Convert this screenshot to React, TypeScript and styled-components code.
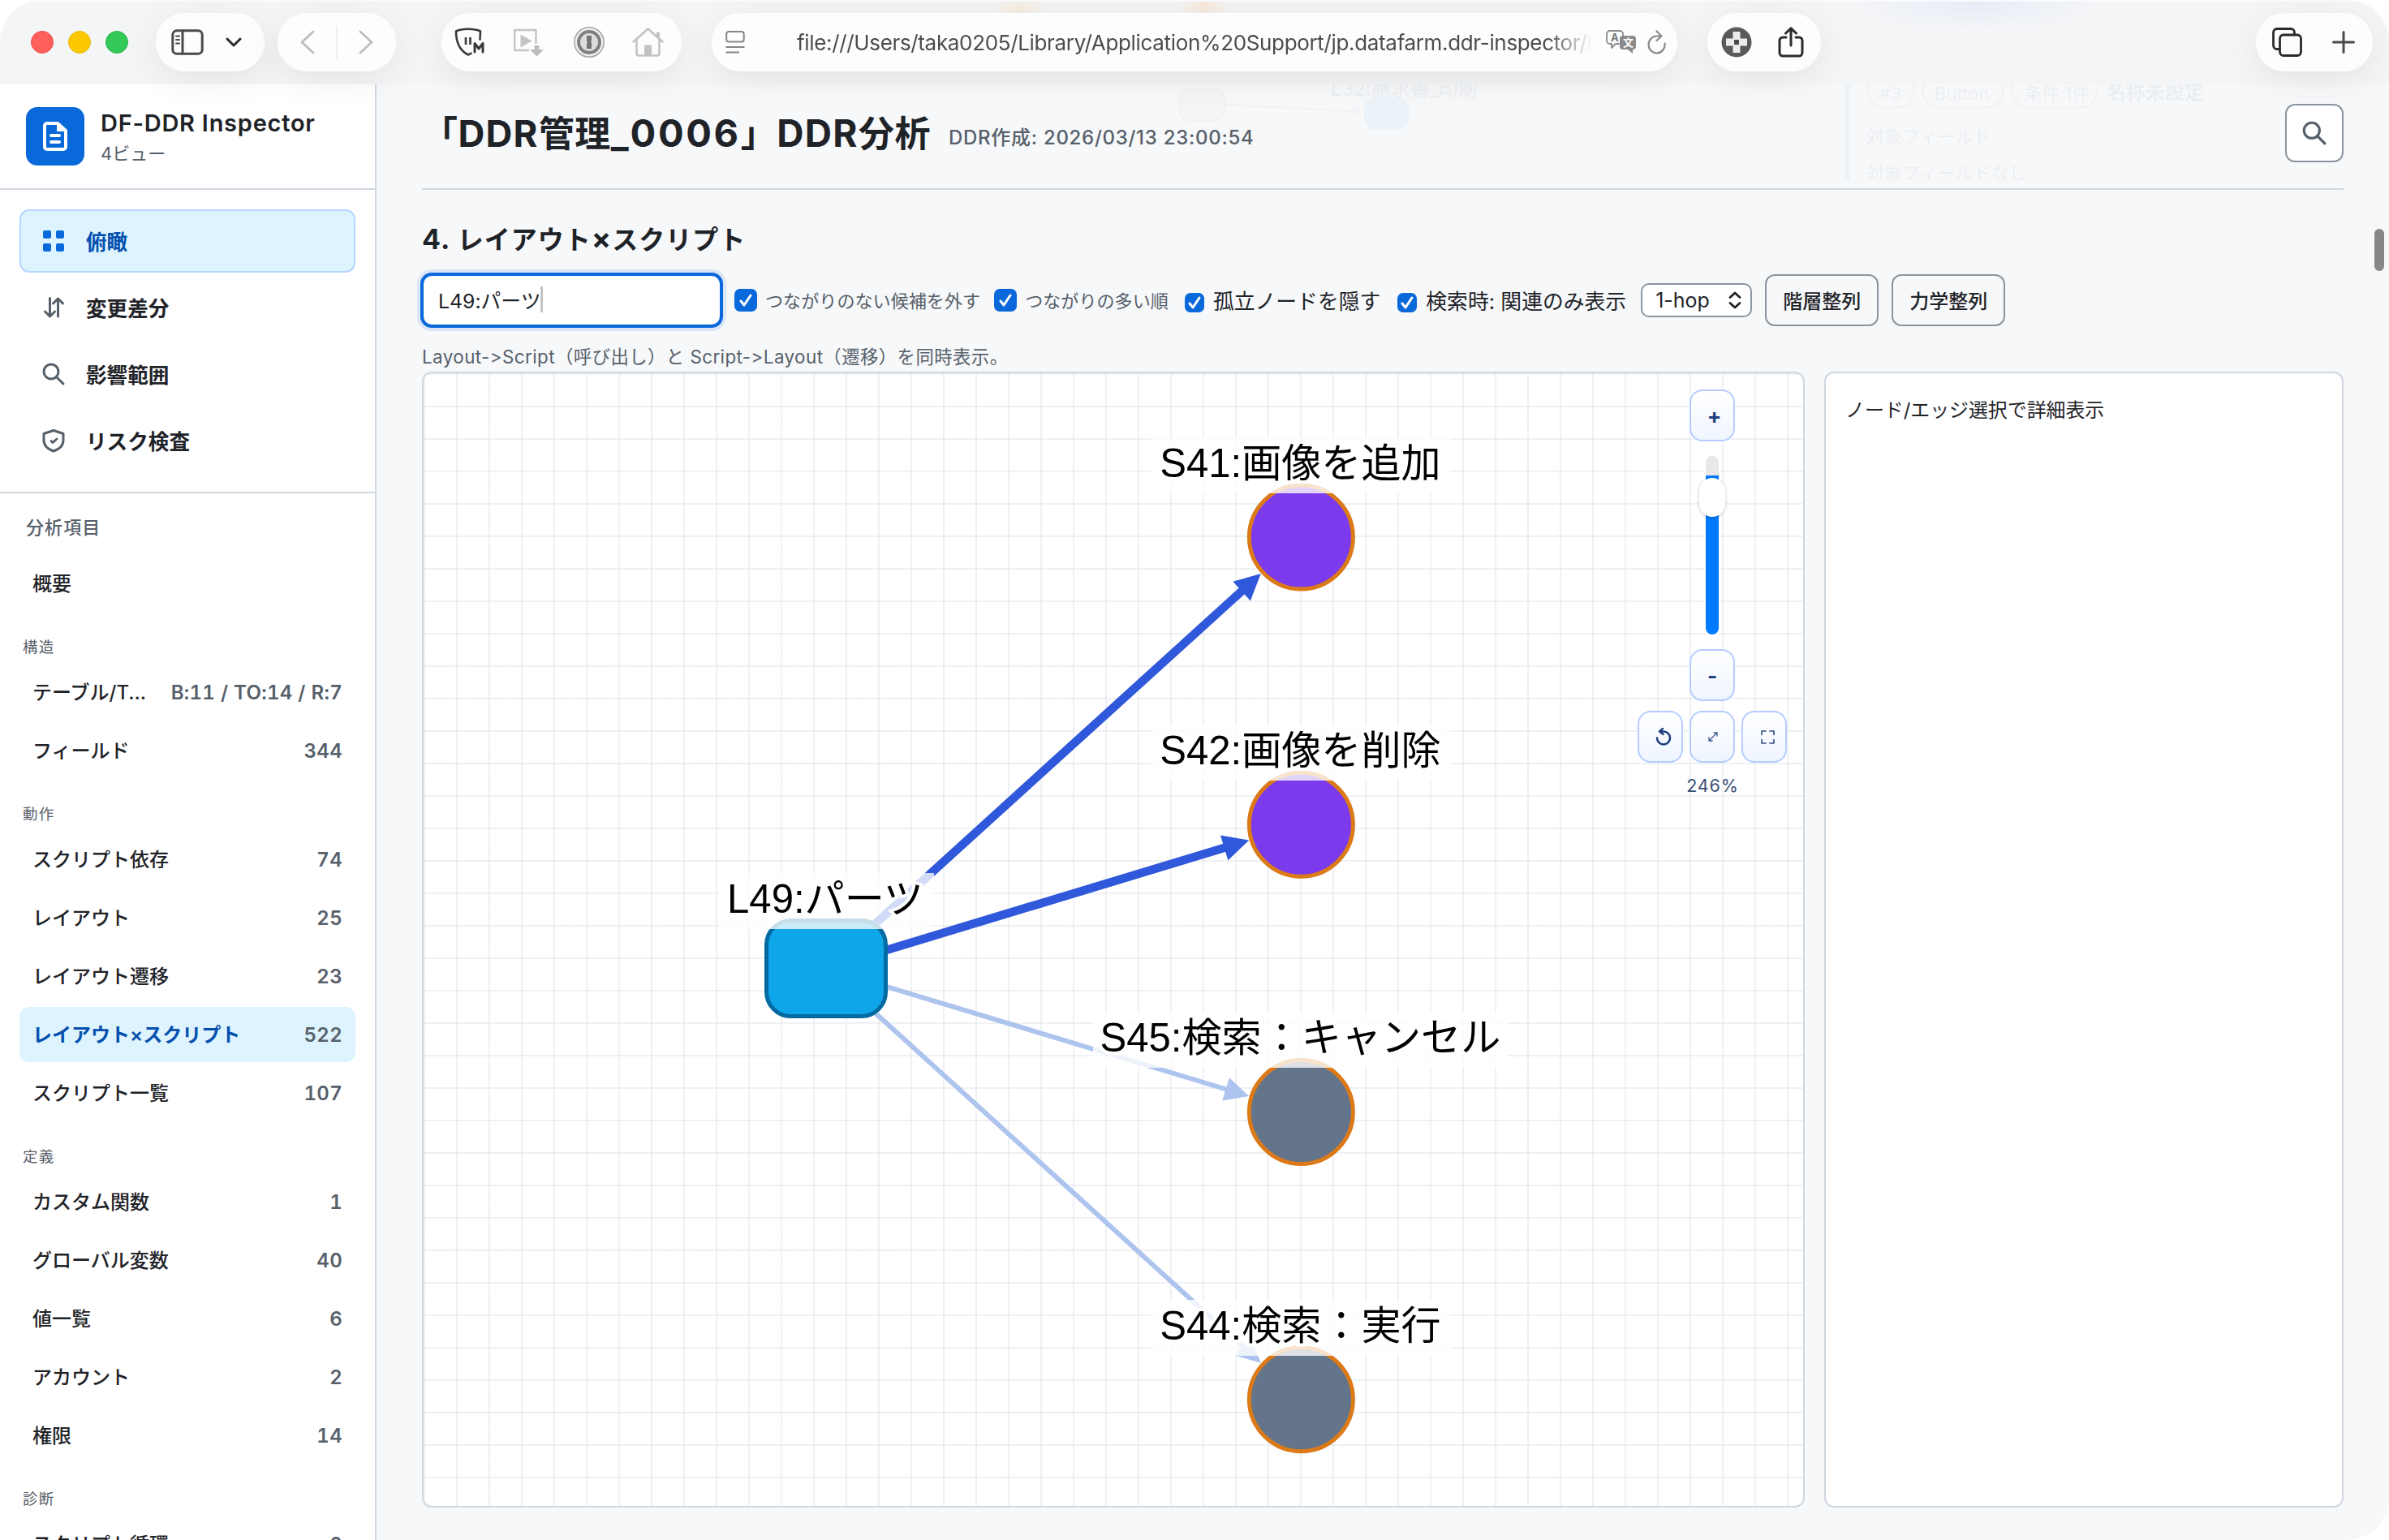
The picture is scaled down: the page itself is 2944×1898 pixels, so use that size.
import React from "react";
import styled, { createGlobalStyle } from "styled-components";

const Global = createGlobalStyle`
  * { box-sizing: border-box; }
  html, body { margin: 0; padding: 0; background: #fff; }
  body, button, input {
    font-family: Inter, "Noto Sans CJK JP", sans-serif;
    font-variant-ligatures: none;
    color: #1f2328;
  }
  svg { display: block; flex: none; }
`;

const Window = styled.div`
  width: 2944px;
  height: 1898px;
  overflow: hidden;
  display: grid;
  grid-template-rows: 104px 1fr;
  border-radius: 52px;
  background: #f6f8fa;
  position: relative;
`;

/* ---------- browser toolbar ---------- */

const Toolbar = styled.header`
  position: relative;
  z-index: 3;
  display: flex;
  align-items: flex-start;
  padding: 16px 20px 0 38px;
  background: radial-gradient(ellipse 36px 40px at 1255px 20px, rgba(255, 214, 160, 0.32), transparent),
    radial-gradient(ellipse 36px 26px at 1484px 6px, rgba(255, 206, 160, 0.35), transparent),
    radial-gradient(ellipse 150px 34px at 2435px 4px, rgba(200, 216, 246, 0.32), transparent), #f4f5f7;
  box-shadow: inset 0 2px 0 #fafbfc;
`;

const Lights = styled.div`
  display: flex;
  gap: 18px;
  height: 72px;
  align-items: center;
  margin-right: 34px;
`;

const Light = styled.i<{ $fill: string; $edge: string }>`
  width: 28px;
  height: 28px;
  border-radius: 50%;
  background: ${(p) => p.$fill};
  border: 1px solid ${(p) => p.$edge};
`;

const Pill = styled.div<{ $w?: number; $gap?: number; $pad: number; $after?: number }>`
  height: 72px;
  ${(p) => (p.$w ? `width: ${p.$w}px;` : "")}
  flex: none;
  display: flex;
  align-items: center;
  gap: ${(p) => p.$gap ?? 0}px;
  padding-left: ${(p) => p.$pad}px;
  margin-right: ${(p) => p.$after ?? 0}px;
  border-radius: 36px;
  background: #fcfdfe;
  box-shadow: 0 10px 44px rgba(0, 0, 0, 0.075), 0 0 2px rgba(255, 255, 255, 0.9);
`;

const PillDivider = styled.i`
  width: 2px;
  height: 40px;
  background: #eeeff0;
`;

const Url = styled.div`
  width: 978px;
  margin-left: 64px;
  margin-right: 19px;
  padding-top: 2px;
  font-size: 26px;
  line-height: 40px;
  letter-spacing: -0.34px;
  color: #4b4c4d;
  white-space: nowrap;
  overflow: hidden;
  mask-image: linear-gradient(90deg, #000 925px, transparent 980px);
`;

const Spacer = styled.div`
  flex: 1;
`;

/* ---------- page frame ---------- */

const Body = styled.div`
  display: grid;
  grid-template-columns: 464px 1fr;
  min-height: 0;
`;

const Sidebar = styled.aside`
  background: #fff;
  border-right: 2px solid #d0d7e2;
  overflow: hidden;
`;

const Brand = styled.div`
  height: 130px;
  padding: 28px 0 0 32px;
  display: flex;
  gap: 20px;
  border-bottom: 2px solid #d0d7e2;
`;

const BrandMark = styled.div`
  width: 72px;
  height: 72px;
  border-radius: 14px;
  background: #0969da;
  display: grid;
  place-items: center;
`;

const BrandName = styled.div`
  font-size: 29px;
  line-height: 40px;
  font-weight: 600;
  letter-spacing: 0.75px;
  white-space: nowrap;
`;

const BrandSub = styled.div`
  font-size: 22px;
  line-height: 34px;
  color: #57606a;
`;

const ViewNav = styled.nav`
  padding: 24px;
  display: grid;
  gap: 4px;
  border-bottom: 2px solid #d0d7de;
`;

const ViewItem = styled.button<{ $active?: boolean }>`
  height: 78px;
  display: flex;
  align-items: center;
  gap: 24px;
  padding: 0 0 0 24px;
  border: 2px solid ${(p) => (p.$active ? "#b6d6ff" : "transparent")};
  border-radius: 12px;
  background: ${(p) => (p.$active ? "#ddf4ff" : "transparent")};
  color: ${(p) => (p.$active ? "#0550ae" : "#1f2328")};
  font-size: 25.6px;
  font-weight: 600;
  text-align: left;

  span {
    padding-bottom: 2px;
  }
`;

const ListTitle = styled.div`
  padding: 25px 0 0 32px;
  height: 77px;
  font-size: 22px;
  line-height: 34px;
  letter-spacing: 1.1px;
  font-weight: 500;
  color: #57606a;
`;

const Group = styled.section`
  padding: 0 24px;
  display: grid;
  gap: 4px;
`;

const GroupTitle = styled.h3`
  margin: 0 0 -4px;
  height: 66px;
  padding: 30px 0 0 4px;
  font-size: 18.5px;
  line-height: 28px;
  letter-spacing: 1.2px;
  font-weight: 400;
  color: #57606a;
`;

const Entry = styled.a<{ $active?: boolean }>`
  height: 68px;
  display: flex;
  align-items: center;
  justify-content: space-between;
  padding: 1px 16px 0;
  border-radius: 12px;
  background: ${(p) => (p.$active ? "#ddf4ff" : "transparent")};
  color: ${(p) => (p.$active ? "#0550ae" : "#1f2328")};
  font-size: 24px;
  font-weight: ${(p) => (p.$active ? 600 : 500)};
`;

const EntryLabel = styled.span`
  line-height: 36px;
  white-space: nowrap;
`;

const EntryCount = styled.span`
  flex: none;
  font-size: 24px;
  line-height: 36px;
  font-weight: 600;
  letter-spacing: 0.3px;
  font-variant-numeric: tabular-nums;
  color: #57606a;
`;

const Main = styled.main`
  padding: 0 56px 0 56px;
  display: flex;
  flex-direction: column;
  position: relative;
`;

const TitleBar = styled.div`
  height: 130px;
  flex: none;
  display: flex;
  align-items: flex-start;
  border-bottom: 2px solid #d0d7de;
  position: relative;
`;

const PageTitle = styled.h1`
  margin: 28px 0 0;
  font-size: 44px;
  line-height: 66px;
  font-weight: 700;
  letter-spacing: 0.5px;
  white-space: nowrap;
`;

const Latin = styled.span<{ $size: number; $ls?: number }>`
  font-size: ${(p) => p.$size}px;
  letter-spacing: ${(p) => p.$ls ?? 0}px;
  line-height: 1;
`;

const Created = styled.div`
  margin: 48px 0 0 22px;
  font-size: 24px;
  line-height: 36px;
  font-weight: 500;
  letter-spacing: 0.72px;
  color: #57606a;
  white-space: nowrap;
`;

const SearchButton = styled.button`
  margin-top: 24px;
  width: 72px;
  height: 72px;
  padding: 0;
  display: grid;
  place-items: center;
  border: 2px solid #8c959f;
  border-radius: 12px;
  background: #fff;
`;

/* content scrolled underneath the translucent title bar */
const Under = styled.div`
  position: absolute;
  inset: 0 56px auto 56px;
  height: 118px;
  overflow: hidden;
  opacity: 0.045;
`;

const UnderBox = styled.div<{ $x: number; $y: number; $w: number; $h: number; $c: string; $b: string; $r?: number }>`
  position: absolute;
  left: ${(p) => p.$x}px;
  top: ${(p) => p.$y}px;
  width: ${(p) => p.$w}px;
  height: ${(p) => p.$h}px;
  background: ${(p) => p.$c};
  border: 3px solid ${(p) => p.$b};
  border-radius: ${(p) => p.$r ?? 14}px;
`;

const UnderText = styled.div<{ $x: number; $y: number; $s?: number; $bold?: boolean }>`
  position: absolute;
  left: ${(p) => p.$x}px;
  top: ${(p) => p.$y}px;
  font-size: ${(p) => p.$s ?? 22}px;
  font-weight: ${(p) => (p.$bold ? 700 : 400)};
  line-height: 30px;
  white-space: nowrap;
`;

const UnderEdge = styled.svg`
  position: absolute;
  left: 990px;
  top: 18px;
`;

const SectionTitle = styled.h2`
  margin: 37px 0 17px;
  font-size: 32px;
  line-height: 50px;
  font-weight: 700;
  letter-spacing: 1px;
`;

const Controls = styled.div`
  height: 64px;
  display: flex;
  align-items: center;
  white-space: nowrap;
`;

const Query = styled.div`
  width: 369px;
  height: 64px;
  margin-right: 16px;
  padding: 0 0 2px 18px;
  display: flex;
  align-items: center;
  border: 2px solid #0969da;
  border-radius: 12px;
  background: #fff;
  box-shadow: 0 0 0 2px #0969da, 0 0 0 6px #dbe5f6;
  font-size: 24.8px;
`;

const Caret = styled.i`
  width: 3px;
  height: 32px;
  background: #c4c4c4;
`;

const Check = styled.label<{ $small?: boolean; $after: number }>`
  display: flex;
  align-items: center;
  gap: ${(p) => (p.$small ? 11 : 10)}px;
  margin-right: ${(p) => p.$after}px;
  font-size: ${(p) => (p.$small ? 25.8 : 22.1)}px;
  color: ${(p) => (p.$small ? "#1f2328" : "#57606a")};

  span {
    padding-bottom: 2px;
  }
`;

const Box = styled.i<{ $size: number }>`
  width: ${(p) => p.$size}px;
  height: ${(p) => p.$size}px;
  margin-top: ${(p) => (p.$size < 28 ? 5 : 0)}px;
  border-radius: 7px;
  background: #0969da;
  display: grid;
  place-items: center;
`;

const Select = styled.div`
  width: 137px;
  height: 42px;
  margin-right: 16px;
  padding: 0 11px 0 16px;
  display: flex;
  align-items: center;
  justify-content: space-between;
  border: 2px solid #8c959f;
  border-radius: 10px;
  background: #fff;
  font-size: 25px;
`;

const PlainButton = styled.button`
  width: 140px;
  height: 64px;
  margin-right: 16px;
  padding: 0 0 2px;
  border: 2px solid #8c959f;
  border-radius: 12px;
  background: #f6f8fa;
  font-size: 24px;
  font-weight: 500;
`;

const Hint = styled.p`
  margin: 22px 0 2px;
  font-size: 22.4px;
  line-height: 32px;
  letter-spacing: 0.42px;
  color: #57606a;
`;

const Split = styled.div`
  display: grid;
  grid-template-columns: 1704px 640px;
  gap: 24px;
  height: 1400px;
`;

const Canvas = styled.div`
  position: relative;
  border: 2px solid #d0d7de;
  border-radius: 12px;
  overflow: hidden;
  background-color: #fff;
  background-image: linear-gradient(rgba(208, 215, 222, 0.35) 2px, transparent 2px),
    linear-gradient(90deg, rgba(208, 215, 222, 0.35) 2px, transparent 2px);
  background-size: 40px 40px;
`;

const Detail = styled.div`
  border: 2px solid #d0d7de;
  border-radius: 12px;
  background: #fff;
  padding: 28px 24px;
  font-size: 23.9px;
  line-height: 36px;
`;

const NodeLabel = styled.div<{ $x: number; $y: number; $w: number }>`
  position: absolute;
  left: ${(p) => p.$x}px;
  top: ${(p) => p.$y}px;
  width: ${(p) => p.$w}px;
  height: 69px;
  transform: translateX(-50%);
  background: rgba(255, 255, 255, 0.78);
  text-align: center;
  text-indent: -2px;
  font-family: "Liberation Sans", "Noto Sans CJK JP", sans-serif;
  font-size: 49.1px;
  line-height: 64px;
  color: #000;
  white-space: nowrap;
  -webkit-text-stroke: 8px #fff;
  paint-order: stroke fill;
`;

const Zoomer = styled.div`
  position: absolute;
  top: 20px;
  right: 20px;
  width: 184px;
  display: flex;
  flex-direction: column;
  align-items: center;
`;

const ZoomButton = styled.button<{ $shift?: number }>`
  width: 56px;
  height: 64px;
  padding: 0 0 0 ${(p) => p.$shift ?? 0}px;
  display: grid;
  place-items: center;
  border: 2px solid #b6ccff;
  border-radius: 16px;
  background: linear-gradient(#fff, #eff5ff);
  color: #1e3f7c;
  font-size: 26px;
  font-weight: 700;
`;

const ZoomRow = styled.div`
  display: flex;
  gap: 8px;
  margin-top: 12px;
`;

const Track = styled.div`
  width: 16px;
  height: 220px;
  margin: 18px 0;
  display: flex;
  flex-direction: column;
  align-items: center;
  border-radius: 8px;
  background: linear-gradient(#e8e8e8 24px, #007aff 24px);
  box-shadow: 0 0 0 2px #fff;
`;

const Thumb = styled.i`
  width: 32px;
  height: 48px;
  margin-top: 27px;
  border-radius: 16px;
  background: #fff;
  box-shadow: 0 1px 4px rgba(0, 0, 0, 0.22);
`;

const Percent = styled.div`
  margin-top: 12px;
  padding-left: 1px;
  font-size: 21.5px;
  line-height: 32px;
  letter-spacing: 0.9px;
  color: #3a5078;
`;

const Scrollbar = styled.i`
  position: absolute;
  left: 2926px;
  top: 282px;
  width: 12px;
  height: 52px;
  border-radius: 6px;
  background: #868788;
`;

/* ---------- icons ---------- */

const line = (color: string, w: number) => ({
  fill: "none",
  stroke: color,
  strokeWidth: w,
  strokeLinecap: "round" as const,
  strokeLinejoin: "round" as const,
});

const SidebarIcon = () => (
  <svg width="40" height="32" viewBox="0 0 40 32" {...line("#4a4a4a", 3)}>
    <rect x="1.8" y="1.8" width="36.4" height="28.4" rx="5" />
    <path d="M14 2v28" />
    <path d="M6 8.5h4M6 13h4M6 17.500h4" strokeWidth="2" />
  </svg>
);

const SmallDown = () => (
  <svg width="20" height="12" viewBox="0 0 20 12" {...line("#2b2b2b", 3)}>
    <path d="M2 2l8 8 8-8" />
  </svg>
);

const Chevron = ({ flip }: { flip?: boolean }) => (
  <svg width="18" height="30" viewBox="0 0 18 30" {...line("#bcbdbe", 2.8)}>
    <path d={flip ? "M2 2l14 13L2 28" : "M16 2L2 15l14 13"} />
  </svg>
);

const ShieldIcon = () => (
  <svg width="40" height="38" viewBox="0 0 40 38" {...line("#3a3a3c", 2.6)}>
    <path d="M31.500 15.500L32 5.500C27 3 22 2.800 17 2.800S7 3 2 5.500C2 18 5.500 29 17 34.500c1.500-.5 2.500-1 3.500-1.800" />
    <path d="M14 13v9M19.500 13v9" strokeWidth="2.600" strokeLinecap="butt" />
    <path d="M25 31V20.500l5 6.500 5-6.500V31" strokeWidth="3" />
  </svg>
);

const PlayDownIcon = () => (
  <svg width="40" height="38" viewBox="0 0 40 38" {...line("#c4c4c5", 2.4)}>
    <path d="M19 29H1.200V4h26.300v17" strokeLinejoin="miter" strokeLinecap="butt" />
    <path d="M8.500 9.500v16l14-8z" fill="#c4c4c5" stroke="none" />
    <path d="M25.500 23h6v5h5.500l-8.500 8.500L20 28h5.500z" fill="#bdbdbe" stroke="none" />
  </svg>
);

const OnePasswordIcon = () => (
  <svg width="40" height="40" viewBox="0 0 40 40">
    <circle cx="20" cy="20" r="18.200" fill="#f0f0f0" stroke="#a4a4a4" strokeWidth="1.500" />
    <circle cx="20" cy="20" r="13" fill="#dcdcdc" stroke="#7f7f7f" strokeWidth="4" />
    <path d="M17 12h6v6l-1 1.500 1 1.500v7h-6v-6l1-1.500-1-1.500z" fill="#737373" />
  </svg>
);

const HouseIcon = () => (
  <svg width="40" height="38" viewBox="0 0 40 38" {...line("#c2c2c3", 2.5)}>
    <path d="M1.500 18.500L19.500 2.500l18 16" />
    <path d="M5.500 15.500V33a2.500 2.500 0 0 0 2.500 2.500h23a2.500 2.500 0 0 0 2.500-2.500V15.500" />
    <path d="M32 6.500v6" strokeWidth="4" strokeLinecap="butt" />
    <path d="M15 35V22.500h9V35z" fill="#c2c2c3" stroke="none" />
  </svg>
);

const ReaderIcon = () => (
  <svg width="24" height="30" viewBox="0 0 24 30" {...line("#858585", 2)}>
    <rect x="1.200" y="2" width="21.500" height="12.500" rx="3" />
    <path d="M1.200 21h21.500M1.200 27.500h15" />
  </svg>
);

const TranslateGlyph = styled.span`
  position: relative;
  display: block;
  width: 38px;
  height: 30px;
  margin-right: 13px;
`;

const GlyphText = styled.b<{ $x: number; $y: number; $c: string }>`
  position: absolute;
  left: ${(p) => p.$x}px;
  top: ${(p) => p.$y}px;
  font-size: 13px;
  line-height: 14px;
  color: ${(p) => p.$c};
`;

const TranslateIcon = () => (
  <TranslateGlyph>
    <svg width="38" height="30" viewBox="0 0 38 30">
      <path
        d="M16 17h-4l-5 5v-5H5a4 4 0 0 1-4-4V5a4 4 0 0 1 4-4h12a4 4 0 0 1 4 4v2"
        {...line("#8a8a8a", 1.8)}
      />
      <path d="M21 7h12a4 4 0 0 1 4 4v9a4 4 0 0 1-4 4v5l-6-5h-6a4 4 0 0 1-4-4v-9a4 4 0 0 1 4-4z" fill="#8a8a8a" />
    </svg>
    <GlyphText $x={6} $y={2} $c="#777">A</GlyphText>
    <GlyphText $x={21} $y={8} $c="#fff">文</GlyphText>
  </TranslateGlyph>
);

const ReloadIcon = () => (
  <svg width="24" height="30" viewBox="0 0 24 30" {...line("#8a8a8a", 2.2)}>
    <path d="M21.500 16.500A10 10.500 0 1 1 12 7.500h4" />
    <path d="M11.500 1.500l6 6-6 5.500" />
  </svg>
);

const CrossIcon = () => (
  <svg width="38" height="38" viewBox="0 0 38 38">
    <circle cx="19" cy="19" r="18.500" fill="#5a5a5a" />
    <path d="M14.500 6h9v8.500H32v9h-8.500V32h-9v-8.500H6v-9h8.500z" fill="#ececec" />
    <rect x="16" y="16" width="6" height="6" fill="#4a4a4a" />
  </svg>
);

const ShareIcon = () => (
  <svg width="32" height="38" viewBox="0 0 32 38" {...line("#2b2b2b", 3)}>
    <path d="M10 13H6a4 4 0 0 0-4 4v15a4 4 0 0 0 4 4h20a4 4 0 0 0 4-4V17a4 4 0 0 0-4-4h-4M16 23V2M9.500 8L16 1.800 22.500 8" />
  </svg>
);

const TabsIcon = () => (
  <svg width="37" height="36" viewBox="0 0 37 36" {...line("#2b2b2b", 2.8)}>
    <rect x="9.500" y="9" width="26" height="25.500" rx="4.500" />
    <path d="M9.500 26.500H6A4.500 4.500 0 0 1 1.500 22V6A4.500 4.500 0 0 1 6 1.500h17A4.500 4.500 0 0 1 27.500 6v3" />
  </svg>
);

const PlusIcon = () => (
  <svg width="28" height="28" viewBox="0 0 28 28" {...line("#4a4a4a", 3)}>
    <path d="M14 1.500v25M1.500 14h25" />
  </svg>
);

const DocIcon = () => (
  <svg width="32" height="38" viewBox="0 0 32 38" {...line("#fff", 4)}>
    <path d="M19 3H6a3 3 0 0 0-3 3v26a3 3 0 0 0 3 3h20a3 3 0 0 0 3-3V12z" />
    <path d="M19 3v9h10z" fill="#fff" strokeWidth="2" />
    <path d="M11 18h10M11 26h10" />
  </svg>
);

const GridIcon = () => (
  <svg width="32" height="32" viewBox="0 0 32 32" fill="#0969da">
    <rect x="3" y="3" width="10" height="10" rx="2" />
    <rect x="19" y="3" width="10" height="10" rx="2" />
    <rect x="3" y="19" width="10" height="10" rx="2" />
    <rect x="19" y="19" width="10" height="10" rx="2" />
  </svg>
);

const SwapIcon = () => (
  <svg width="32" height="32" viewBox="0 0 32 32" {...line("#57606a", 3)}>
    <path d="M11.500 4.500v22M5.500 21l6 6 6-6M21.500 27V5M15.500 11l6-6 6 6" />
  </svg>
);

const SearchIcon = ({ size = 32 }: { size?: number }) => (
  <svg width={size} height={size} viewBox="0 0 32 32" {...line("#57606a", 3)}>
    <circle cx="13" cy="13" r="9" />
    <path d="M19.500 19.500L28 28" />
  </svg>
);

const ShieldCheckIcon = () => (
  <svg width="32" height="32" viewBox="0 0 32 32" {...line("#57606a", 3)}>
    <path d="M16 3.500l12 4v8c0 7-4.500 11-12 13.500C8.500 26.500 4 22.500 4 15.500v-8z" />
    <path d="M13 16.500l2 2 5-4.500" />
  </svg>
);

const Tick = () => (
  <svg width="18" height="18" viewBox="0 0 18 18" {...line("#fff", 3)}>
    <path d="M3 10l4 5 8-12" />
  </svg>
);

const UpDown = () => (
  <svg width="16" height="22" viewBox="0 0 16 22" {...line("#1f2328", 2.8)}>
    <path d="M2 7.500L8 2l6 5.500M2 14.500L8 20l6-5.500" />
  </svg>
);

const ResetIcon = () => (
  <svg width="20" height="22" viewBox="0 0 20 22" {...line("#1e3f7c", 2.6)}>
    <path d="M2 12.500A8 8 0 1 0 10 4.500H6" />
    <path d="M9 1L5 4.500 9.500 8" strokeWidth="2.400" />
  </svg>
);

const ResizeIcon = () => (
  <svg width="12" height="12" viewBox="0 0 12 12" {...line("#3d5a8f", 1.3)}>
    <path d="M1.500 10.500l9-9M7 1h4v4M1 7v4h4" />
  </svg>
);

const FullIcon = () => (
  <svg width="17" height="17" viewBox="0 0 17 17" {...line("#2f4d86", 1.6)}>
    <path d="M1 5.500V1h5M11 1h5v4.500M16 11.500V16h-5M6 16H1v-4.500" />
  </svg>
);

/* ---------- graph ---------- */

type Target = { y: number; label: string; w: number; fill: string; strong: boolean };

const source = { x: 496, y: 733.5 };
const targetX = 1081.4;
const targets: Target[] = [
  { y: 202, label: "S41:画像を追加", w: 369, fill: "#7c3aed", strong: true },
  { y: 556.2, label: "S42:画像を削除", w: 369, fill: "#7c3aed", strong: true },
  { y: 910.4, label: "S45:検索：キャンセル", w: 512, fill: "#64748b", strong: false },
  { y: 1264.7, label: "S44:検索：実行", w: 369, fill: "#64748b", strong: false },
];

const Edge = ({ t }: { t: Target }) => {
  const dx = targetX - source.x;
  const dy = t.y - source.y;
  const len = Math.hypot(dx, dy);
  const ux = dx / len;
  const uy = dy / len;
  const tip = len - 67;
  const head = t.strong ? 32 : 30;
  const half = t.strong ? 16 : 14.8;
  const at = (d: number, s = 0) => `${source.x + ux * d - uy * s},${source.y + uy * d + ux * s}`;
  const color = t.strong ? "#2f58da" : "#adc4ee";
  return (
    <g>
      <polyline points={`${at(0)} ${at(tip - head + 4)}`} stroke={color} strokeWidth={t.strong ? 10.5 : 6} />
      <polygon points={`${at(tip)} ${at(tip - head, half)} ${at(tip - head, -half)}`} fill={color} />
    </g>
  );
};

const Graph = () => (
  <svg width="1700" height="1396" viewBox="0 0 1700 1396">
    {targets.map((t) => (
      <Edge key={t.label} t={t} />
    ))}
    <rect x="420" y="672" width="152" height="123" rx="32" fill="#fff" />
    <rect x="422.500" y="674.500" width="147" height="118" rx="30" fill="#0ea5e9" stroke="#0369a1" strokeWidth="5" />
    {targets.map((t) => (
      <circle key={t.label} cx={targetX} cy={t.y} r="64" fill={t.fill} stroke="#dc7a18" strokeWidth="5" />
    ))}
  </svg>
);

/* ---------- data ---------- */

const groups: { title: string; items: [string, string][] }[] = [
  { title: "構造", items: [["テーブル/T...", "B:11 / TO:14 / R:7"], ["フィールド", "344"]] },
  {
    title: "動作",
    items: [
      ["スクリプト依存", "74"],
      ["レイアウト", "25"],
      ["レイアウト遷移", "23"],
      ["レイアウト×スクリプト", "522"],
      ["スクリプト一覧", "107"],
    ],
  },
  {
    title: "定義",
    items: [
      ["カスタム関数", "1"],
      ["グローバル変数", "40"],
      ["値一覧", "6"],
      ["アカウント", "2"],
      ["権限", "14"],
    ],
  },
  { title: "診断", items: [["スクリプト循環", "0"]] },
];

export default function App() {
  return (
    <>
      <Global />
      <Window>
        <Toolbar>
          <Lights>
            <Light $fill="#ff5f5b" $edge="#ec4f4c" />
            <Light $fill="#fbc800" $edge="#e9b800" />
            <Light $fill="#33c858" $edge="#22b447" />
          </Lights>
          <Pill $w={134} $pad={19} $gap={27} $after={16}>
            <SidebarIcon />
            <SmallDown />
          </Pill>
          <Pill $w={146} $pad={28} $gap={26} $after={56}>
            <Chevron />
            <PillDivider />
            <Chevron flip />
          </Pill>
          <Pill $w={296} $pad={16} $gap={33} $after={37}>
            <ShieldIcon />
            <PlayDownIcon />
            <OnePasswordIcon />
            <HouseIcon />
          </Pill>
          <Pill $w={1190} $pad={17} $after={37}>
            <ReaderIcon />
            <Url>file:///Users/taka0205/Library/Application%20Support/jp.datafarm.ddr-inspector/l</Url>
            <TranslateIcon />
            <ReloadIcon />
          </Pill>
          <Pill $w={140} $pad={17} $gap={32}>
            <CrossIcon />
            <ShareIcon />
          </Pill>
          <Spacer />
          <Pill $w={144} $pad={20} $gap={37}>
            <TabsIcon />
            <PlusIcon />
          </Pill>
        </Toolbar>

        <Body>
          <Sidebar>
            <Brand>
              <BrandMark>
                <DocIcon />
              </BrandMark>
              <div>
                <BrandName>DF-DDR Inspector</BrandName>
                <BrandSub>4ビュー</BrandSub>
              </div>
            </Brand>
            <ViewNav>
              <ViewItem $active>
                <GridIcon />
                <span>俯瞰</span>
              </ViewItem>
              <ViewItem>
                <SwapIcon />
                <span>変更差分</span>
              </ViewItem>
              <ViewItem>
                <SearchIcon />
                <span>影響範囲</span>
              </ViewItem>
              <ViewItem>
                <ShieldCheckIcon />
                <span>リスク検査</span>
              </ViewItem>
            </ViewNav>
            <ListTitle>分析項目</ListTitle>
            <Group>
              <Entry>
                <EntryLabel>概要</EntryLabel>
              </Entry>
            </Group>
            {groups.map((g) => (
              <Group key={g.title}>
                <GroupTitle>{g.title}</GroupTitle>
                {g.items.map(([label, count]) => (
                  <Entry key={label} $active={count === "522"}>
                    <EntryLabel>{label}</EntryLabel>
                    <EntryCount>{count}</EntryCount>
                  </Entry>
                ))}
              </Group>
            ))}
          </Sidebar>

          <Main>
            <TitleBar>
              <PageTitle>
                「<Latin $size={45.5} $ls={1.2}>DDR</Latin>管理<Latin $size={46} $ls={2}>_</Latin>
                <Latin $size={47} $ls={2.6}>0006</Latin>」<Latin $size={46} $ls={1.4}>DDR</Latin>分析
              </PageTitle>
              <Created>DDR作成: 2026/03/13 23:00:54</Created>
              <Spacer />
              <SearchButton>
                <SearchIcon size={34} />
              </SearchButton>
            </TitleBar>
            <Under>
              <UnderBox $x={932} $y={5} $w={58} $h={41} $c="#dcb888" $b="#b89868" />
              <UnderEdge width="172" height="20" viewBox="0 0 172 20">
                <path d="M0 7L160 15" stroke="#8c959f" strokeWidth="3" />
                <path d="M158 9l13 7-14 5z" fill="#8c959f" />
              </UnderEdge>
              <UnderBox $x={1161} $y={16} $w={55} $h={40} $c="#0e90f0" $b="#0e90f0" />
              <UnderText $x={1120} $y={-9} $s={24}>L32:請求書_印刷</UnderText>
              <UnderBox $x={1754} $y={-20} $w={6} $h={150} $c="#4f80ee" $b="#4f80ee" $r={2} />
              <UnderBox $x={1780} $y={-14} $w={60} $h={44} $c="transparent" $b="#8c959f" $r={22} />
              <UnderText $x={1796} $y={-4}>#3</UnderText>
              <UnderBox $x={1848} $y={-14} $w={102} $h={44} $c="transparent" $b="#8c959f" $r={22} />
              <UnderText $x={1864} $y={-4}>Button</UnderText>
              <UnderBox $x={1958} $y={-14} $w={108} $h={44} $c="transparent" $b="#8c959f" $r={22} />
              <UnderText $x={1974} $y={-4}>条件 1件</UnderText>
              <UnderText $x={2076} $y={-5} $s={24} $bold>名称未設定</UnderText>
              <UnderText $x={1780} $y={49}>対象フィールド</UnderText>
              <UnderText $x={1780} $y={94}>対象フィールドなし</UnderText>
            </Under>

            <SectionTitle>
              <Latin $size={34} $ls={1.2}>4. </Latin>レイアウト<Latin $size={36} $ls={1}>×</Latin>スクリプト
            </SectionTitle>
            <Controls>
              <Query>
                L49:パーツ
                <Caret />
              </Query>
              <Check $after={17}>
                <Box $size={28}><Tick /></Box>
                <span>つながりのない候補を外す</span>
              </Check>
              <Check $after={20}>
                <Box $size={28}><Tick /></Box>
                <span>つながりの多い順</span>
              </Check>
              <Check $small $after={21}>
                <Box $size={24}><Tick /></Box>
                <span>孤立ノードを隠す</span>
              </Check>
              <Check $small $after={18}>
                <Box $size={24}><Tick /></Box>
                <span>検索時: 関連のみ表示</span>
              </Check>
              <Select>
                1-hop
                <UpDown />
              </Select>
              <PlainButton>階層整列</PlainButton>
              <PlainButton>力学整列</PlainButton>
            </Controls>
            <Hint>Layout-&gt;Script（呼び出し）と Script-&gt;Layout（遷移）を同時表示。</Hint>
            <Split>
              <Canvas>
                <Graph />
                <NodeLabel $x={496} $y={616} $w={266}>L49:パーツ</NodeLabel>
                {targets.map((t) => (
                  <NodeLabel key={t.label} $x={targetX} $y={t.y - 123} $w={t.w}>
                    {t.label}
                  </NodeLabel>
                ))}
                <Zoomer>
                  <ZoomButton $shift={5}>+</ZoomButton>
                  <Track>
                    <Thumb />
                  </Track>
                  <ZoomButton>-</ZoomButton>
                  <ZoomRow>
                    <ZoomButton $shift={8}><ResetIcon /></ZoomButton>
                    <ZoomButton $shift={1}><ResizeIcon /></ZoomButton>
                    <ZoomButton $shift={8}><FullIcon /></ZoomButton>
                  </ZoomRow>
                  <Percent>246%</Percent>
                </Zoomer>
              </Canvas>
              <Detail>ノード/エッジ選択で詳細表示</Detail>
            </Split>
          </Main>
        </Body>
        <Scrollbar />
      </Window>
    </>
  );
}
